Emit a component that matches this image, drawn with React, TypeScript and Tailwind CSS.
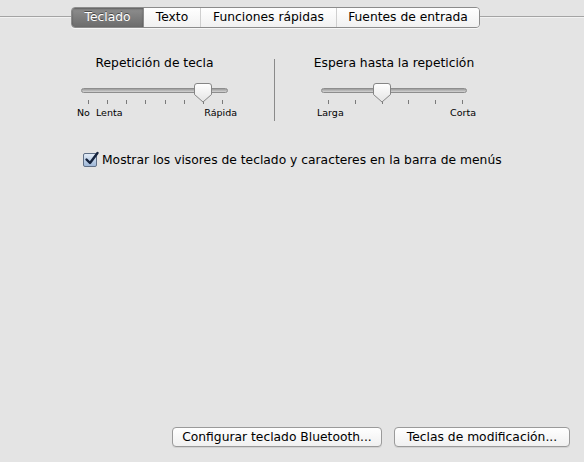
import React from "react";

const font = { fontFamily: '"DejaVu Sans", "Liberation Sans", sans-serif' };

const tabs = [
  { label: "Teclado", w: "w-[71px]", active: true },
  { label: "Texto", w: "w-[57px]", active: false },
  { label: "Funciones rápidas", w: "w-[136px]", active: false },
  { label: "Fuentes de entrada", w: "w-[143px]", active: false },
];

function Thumb() {
  return (
    <svg width="18" height="20" viewBox="0 0 18 20">
      <defs>
        <linearGradient id="thumbFill" x1="0" y1="0" x2="0" y2="1">
          <stop offset="0" stopColor="#ffffff" />
          <stop offset="1" stopColor="#e4e4e4" />
        </linearGradient>
      </defs>
      <path
        d="M3 0.5 H15 Q17.5 0.5 17.5 3 V11.5 L9 19 L0.5 11.5 V3 Q0.5 0.5 3 0.5 Z"
        fill="url(#thumbFill)"
        stroke="#858585"
      />
    </svg>
  );
}

function Slider(props: { ticks: number; value: number; left: string[]; right: string }) {
  const { ticks, value, left, right } = props;
  // tick area spans 7px..141px of the 147px track
  const thumbX = 7 + (value * 134) / (ticks - 1);
  return (
    <div>
      <div className="relative h-[18px]">
        <div className="absolute left-0 right-0 top-[6px] h-[5px] rounded-full border border-[#8d8d8d] bg-gradient-to-b from-[#9c9c9c] to-[#d4d4d4]" />
        <div className="absolute top-[1px]" style={{ left: thumbX - 9 }}>
          <Thumb />
        </div>
      </div>
      <div className="ml-[7px] flex h-[4px] w-[135px] justify-between">
        {Array.from({ length: ticks }).map((_, i) => (
          <span key={i} className="h-[4px] w-px bg-[#7a7a7a]" />
        ))}
      </div>
      <div className="mt-[2px] flex text-[9.5px] leading-[13px] text-black" style={font}>
        <span className="-ml-[4px]">{left[0]}</span>
        {left[1] && <span className="ml-[6px]">{left[1]}</span>}
        <span className="-mr-[9px] ml-auto">{right}</span>
      </div>
    </div>
  );
}

export default function App() {
  return (
    <div
      className="flex h-[462px] w-[584px] flex-col bg-[#e4e4e4] pt-[7px] text-[12.3px] text-black"
      style={font}
    >
      {/* tab bar */}
      <div className="flex h-[21px] items-start">
        <div className="mt-[9px] h-px w-[71px] bg-[#a4a4a4] shadow-[0_1px_0_#f2f2f2]" />
        <div className="flex h-[21px] overflow-hidden rounded-[4px] border border-[#8c8c8c] shadow-[0_1px_0_rgba(255,255,255,0.7)]">
          {tabs.map((t, i) => (
            <div
              key={t.label}
              className={
                t.active
                  ? `${t.w} flex items-center justify-center bg-gradient-to-b from-[#8f8f8f] to-[#6c6c6c] text-white shadow-[inset_0_1px_2px_rgba(0,0,0,0.35)] [text-shadow:0_-1px_0_rgba(0,0,0,0.45)]`
                  : `${t.w} flex items-center justify-center bg-gradient-to-b from-[#ffffff] to-[#f1f1f1] ${
                      i > 1 ? "border-l border-[#cfcfcf]" : "border-l border-[#8c8c8c]"
                    }`
              }
            >
              {t.label}
            </div>
          ))}
        </div>
        <div className="mt-[9px] h-px flex-1 bg-[#a4a4a4] shadow-[0_1px_0_#f2f2f2]" />
      </div>

      {/* sliders */}
      <div className="mt-[27px] flex items-start">
        <div className="ml-[81px] w-[147px]">
          <div className="flex justify-center whitespace-nowrap leading-[16px]">Repetición de tecla</div>
          <div className="mt-[11px]">
            <Slider ticks={8} value={6} left={["No", "Lenta"]} right="Rápida" />
          </div>
        </div>
        <div className="ml-[46px] mt-[4px] h-[62px] w-px bg-[#8a8a8a]" />
        <div className="ml-[46px] w-[146px]">
          <div className="flex justify-center whitespace-nowrap leading-[16px]">Espera hasta la repetición</div>
          <div className="mt-[11px]">
            <Slider ticks={6} value={2} left={["Larga"]} right="Corta" />
          </div>
        </div>
      </div>

      {/* checkbox */}
      <div className="mt-[31px] flex h-[16px] items-center pl-[83px]">
        <span className="relative h-[14px] w-[14px] rounded-[2px] border border-[#5f6f86] bg-gradient-to-b from-[#e2ebf6] to-[#9fb8d8]">
          <svg
            className="absolute -top-[3px] left-[0px]"
            width="16"
            height="16"
            viewBox="0 0 16 16"
          >
            <path
              d="M2.5 8.5 L6 12 L13.5 2"
              fill="none"
              stroke="#15233d"
              strokeWidth="2.4"
              strokeLinecap="round"
              strokeLinejoin="round"
            />
          </svg>
        </span>
        <span className="ml-[5px] whitespace-nowrap">
          Mostrar los visores de teclado y caracteres en la barra de menús
        </span>
      </div>

      {/* buttons */}
      <div className="mt-auto flex justify-end gap-[12px] pb-[15px] pr-[14px]">
        <button className="flex h-[20px] w-[210px] items-center justify-center rounded-[4px] border border-[#9a9a9a] bg-gradient-to-b from-[#ffffff] to-[#f0f0f0] shadow-[0_1px_0_rgba(0,0,0,0.08)]">
          Configurar teclado Bluetooth...
        </button>
        <button className="flex h-[20px] w-[176px] items-center justify-center rounded-[4px] border border-[#9a9a9a] bg-gradient-to-b from-[#ffffff] to-[#f0f0f0] shadow-[0_1px_0_rgba(0,0,0,0.08)]">
          Teclas de modificación...
        </button>
      </div>
    </div>
  );
}
